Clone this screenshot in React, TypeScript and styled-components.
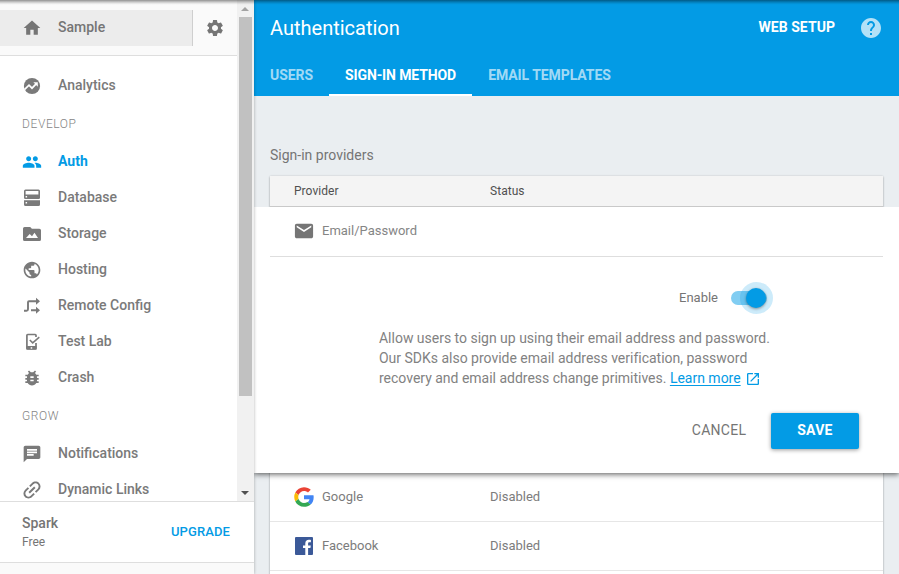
import React from "react";
import styled, { createGlobalStyle, css } from "styled-components";
import {
  MdHome,
  MdSettings,
  MdPeople,
  MdPublic,
  MdBugReport,
  MdChat,
  MdEmail,
  MdHelp,
  MdLink,
  MdOpenInNew,
} from "react-icons/md";

const BLUE = "#039be5";
const GREY = "#757575";

const GlobalStyle = createGlobalStyle`
  * { box-sizing: border-box; }
  body {
    margin: 0;
    overflow: hidden;
    font-family: Roboto, "Liberation Sans", sans-serif;
    font-size: 14px;
    color: ${GREY};
  }
  button { font: inherit; border: 0; padding: 0; background: none; cursor: pointer; }
  svg { display: block; flex: none; }
`;

const Shell = styled.div`
  display: flex;
  position: relative;
  width: 899px;
  height: 574px;
  overflow: hidden;
`;

const TopShade = styled.div`
  position: absolute;
  top: 0;
  left: 0;
  right: 0;
  height: 5px;
  z-index: 5;
  pointer-events: none;
  background: linear-gradient(rgba(0, 0, 0, 0.42), rgba(0, 0, 0, 0.2) 40%, rgba(0, 0, 0, 0.03) 80%, transparent);
`;

/* ---------- sidebar ---------- */

const Sidebar = styled.aside`
  display: flex;
  flex-direction: column;
  width: 254px;
  flex: none;
  z-index: 3;
  background: #fff;
  box-shadow: 0 0 3px rgba(0, 0, 0, 0.3);
`;

const ScrollArea = styled.div`
  display: flex;
  height: 501px;
`;

const NavColumn = styled.div`
  width: 237px;
  overflow: hidden;
`;

const ProjectBar = styled.div`
  display: flex;
  height: 56px;
  padding-top: 10px;
  background: #fafafa;
  border-bottom: 1px solid #dedede;
`;

const ProjectButton = styled.button`
  display: flex;
  align-items: center;
  gap: 16px;
  width: 193px;
  height: 36px;
  padding: 0 0 2px 22px;
  background: #ececec;
  border-right: 1px solid #cfcfcf;
  color: ${GREY};
  font-weight: 500;
  svg { margin-top: 2px; }
`;

const GearButton = styled.button`
  display: grid;
  place-items: center;
  width: 44px;
  height: 36px;
  color: ${GREY};
`;

const Nav = styled.nav`
  padding-top: 11px;
`;

const NavItem = styled.a<{ $active?: boolean }>`
  display: flex;
  align-items: center;
  gap: 16px;
  height: 36px;
  padding-left: 22px;
  font-weight: ${(p) => (p.$active ? 700 : 500)};
  color: ${(p) => (p.$active ? BLUE : "#7a7a7a")};
  svg { margin-top: 2px; }
`;

const NavHeading = styled.div`
  height: 40px;
  padding-left: 22px;
  font-size: 12px;
  font-weight: 300;
  line-height: 42px;
  letter-spacing: 0.6px;
  color: #858585;
`;

const Scrollbar = styled.div`
  display: flex;
  flex-direction: column;
  align-items: center;
  width: 17px;
  padding-right: 1px;
  background: #f1f1f1;
`;

const Arrow = styled.span<{ $down?: boolean }>`
  display: grid;
  place-items: center;
  width: 13px;
  height: 17px;
  &::before {
    content: "";
    border: 4px solid transparent;
    ${(p) =>
      p.$down
        ? css`border-top-color: #505050; border-bottom: 0;`
        : css`border-bottom-color: #a3a3a3; border-top: 0;`}
  }
`;

const Thumb = styled.div`
  width: 13px;
  height: 379px;
  margin-bottom: auto;
  background: #c1c1c1;
`;

const Plan = styled.div`
  display: flex;
  align-items: center;
  justify-content: space-between;
  height: 62px;
  padding: 0 24px 0 22px;
  border-top: 1px solid #dedede;
  border-bottom: 1px solid #dedede;
`;

const PlanName = styled.div`
  font-weight: 500;
  line-height: 19px;
`;

const PlanPrice = styled.div`
  font-size: 12px;
  line-height: 18px;
`;

const UpgradeButton = styled.button`
  padding-bottom: 2px;
  font-size: 13px;
  font-weight: 500;
  letter-spacing: 0.1px;
  color: ${BLUE};
`;

const SidebarFoot = styled.div`
  flex: 1;
  background: #fafafa;
`;

/* ---------- main ---------- */

const Main = styled.main`
  display: flex;
  flex-direction: column;
  flex: 1;
  min-width: 0;
  background: #eaeef1;
`;

const Header = styled.header`
  display: flex;
  flex-direction: column;
  height: 96px;
  background: ${BLUE};
  color: #fff;
`;

const TitleRow = styled.div`
  display: flex;
  align-items: center;
  height: 56px;
  padding: 0 16px;
`;

const Title = styled.h1`
  margin: 0 auto 0 0;
  font-size: 20px;
  font-weight: 400;
`;

const SetupLink = styled.button`
  margin-right: 24px;
  padding-bottom: 2px;
  font-weight: 700;
  letter-spacing: 0.05px;
  line-height: 20px;
  color: #fff;
`;

const HelpButton = styled.button`
  color: rgba(255, 255, 255, 0.7);
`;

const Tabs = styled.div`
  display: flex;
  height: 40px;
`;

const Tab = styled.button<{ $active?: boolean }>`
  height: 40px;
  padding: 0 16px 2px;
  line-height: 36px;
  font-weight: 700;
  letter-spacing: ${(p) => (p.$active ? "-0.11px" : "-0.07px")};
  color: ${(p) => (p.$active ? "#fff" : "rgba(255, 255, 255, 0.65)")};
  box-shadow: ${(p) => (p.$active ? "inset 0 -2px #fff" : "none")};
`;

const Content = styled.section`
  padding: 50px 16px 0;
`;

const SectionTitle = styled.h2`
  margin: 0 0 11px;
  font-size: 14px;
  font-weight: 400;
  line-height: 19px;
`;

const Table = styled.div`
  width: 613px;
  height: 420px;
  background: #fff;
  box-shadow: 0 0 2px rgba(0, 0, 0, 0.12), 0 1px 2px rgba(0, 0, 0, 0.26);
`;

const HeadRow = styled.div`
  display: grid;
  grid-template-columns: 196px 1fr;
  align-items: center;
  height: 31px;
  padding-left: 24px;
  background: #f4f4f4;
  border-bottom: 1px solid #c9c9c9;
  font-size: 12px;
  letter-spacing: 0.05px;
  color: #505050;
`;

const ProviderRow = styled.div`
  display: grid;
  grid-template-columns: 196px 1fr;
  align-items: center;
  height: 49px;
  padding: 0 0 2px 24px;
  border-bottom: 1px solid #e6e6e6;
  font-size: 13px;
  color: #7c7c7c;
  svg { margin: 1px 0 -1px; }
`;

const ProviderName = styled.div`
  display: flex;
  align-items: center;
  gap: 8px;
`;

const ExpandedPanel = styled.div`
  position: relative;
  width: 645px;
  height: 266px;
  margin: 0 -16px;
  padding: 0 16px;
  background: #fff;
  box-shadow: 0 2px 5px rgba(0, 0, 0, 0.5), 0 0 2px rgba(0, 0, 0, 0.12);
  clip-path: inset(0 0 -10px 0);
`;

const PanelHead = styled(ProviderRow)`
  height: 50px;
  border-bottom-color: #dedede;
  color: #858585;
  svg { margin: 0; color: ${GREY}; }
`;

const EnableRow = styled.div`
  display: flex;
  align-items: center;
  gap: 13px;
  height: 32px;
  margin: 25px 0 14px 409px;
  font-size: 13px;
`;

const EnableLabel = styled.span`
  padding-bottom: 2px;
`;

const Switch = styled.span`
  position: relative;
  width: 36px;
  height: 14px;
  border-radius: 7px;
  background: #81cdf2;
`;

const Halo = styled.span`
  position: absolute;
  left: 9px;
  top: -9px;
  width: 33px;
  height: 32px;
  border-radius: 50%;
  background: rgba(3, 155, 229, 0.2);
`;

const Knob = styled.span`
  position: absolute;
  left: 15px;
  top: -3px;
  width: 20px;
  height: 20px;
  border-radius: 50%;
  background: ${BLUE};
  box-shadow: 0 1px 3px rgba(0, 0, 0, 0.4);
`;

const Description = styled.p`
  width: 410px;
  margin: 0 0 0 109px;
  line-height: 20px;
  letter-spacing: -0.01px;
  white-space: nowrap;
  color: #828282;
`;

const LearnMore = styled.a`
  display: inline-flex;
  align-items: center;
  gap: 4px;
  height: 20px;
  vertical-align: top;
  color: ${BLUE};
  span {
    text-decoration: underline;
    text-underline-offset: 2px;
    text-decoration-skip-ink: none;
  }
  svg { margin-top: 1px; }
`;

const Actions = styled.div`
  display: flex;
  justify-content: flex-end;
  gap: 8px;
  padding: 25px 24px 0 0;
`;

const ActionButton = styled.button<{ $primary?: boolean }>`
  width: 88px;
  height: 36px;
  padding-bottom: 2px;
  border-radius: 2px;
  letter-spacing: 0.25px;
  color: ${GREY};
  ${(p) =>
    p.$primary &&
    css`
      background: ${BLUE};
      color: #fff;
      font-weight: 700;
      box-shadow: 0 1px 4px rgba(0, 0, 0, 0.4);
    `}
`;

/* ---------- icons ---------- */

const AnalyticsIcon = () => (
  <svg width="20" height="20" viewBox="0 0 20 20">
    <circle cx="10" cy="10" r="8.1" fill="currentColor" />
    <path d="M2.400 13.600 7 9.200l3 3 4.400-4.500" fill="none" stroke="#fff" strokeWidth="1.700" />
    <path d="M11.400 6.300h4.400v4.400z" fill="#fff" />
  </svg>
);

const DatabaseIcon = () => (
  <svg width="20" height="20" viewBox="0 0 20 20" fill="currentColor">
    <path
      fillRule="evenodd"
      d="M3.500 1.500h13A1.500 1.500 0 0 1 18 3v6.700a1.300 1.300 0 0 1-1.300 1.300H3.300A1.300 1.300 0 0 1 2 9.700V3A1.500 1.500 0 0 1 3.500 1.500zM3.600 3v3.500h12.800V3zM3.600 8v1.500h1.500V8zM2 12.200h16v4.300a1.500 1.500 0 0 1-1.500 1.500h-13A1.500 1.500 0 0 1 2 16.500zM3.600 14v1.600h1.500V14z"
    />
  </svg>
);

const StorageIcon = () => (
  <svg width="20" height="20" viewBox="0 0 20 20" fill="currentColor">
    <path
      fillRule="evenodd"
      d="M2.600 3h5.600l1.700 1.700h7.500A1.600 1.600 0 0 1 19 6.300v9.100a1.600 1.600 0 0 1-1.600 1.600H2.600A1.600 1.600 0 0 1 1 15.400V4.600A1.600 1.600 0 0 1 2.600 3zM4 14.100h12l-3.500-5.300-2.500 3.400-2.300-2.200z"
    />
  </svg>
);

const ConfigIcon = () => (
  <svg width="20" height="20" viewBox="0 0 20 20">
    <path d="M2 14.700h2.500q1.500 0 1.500-1.500V6.200q0-1 1-1H14.500M9 14.200h5.500" fill="none" stroke="currentColor" strokeWidth="1.900" />
    <path d="M14 1.700 18 5.200l-4 3.500zM14 10.700l4 3.500-4 3.500z" fill="currentColor" />
  </svg>
);

const TestLabIcon = () => (
  <svg width="20" height="20" viewBox="0 0 20 20">
    <path
      d="M14 5V3.300q0-.8-.8-.8H5.700q-.8 0-.8.8v12.900q0 .8.8.8h7.500q.8 0 .8-.8V11"
      fill="none"
      stroke="currentColor"
      strokeWidth="1.700"
    />
    <path d="M4.500 14h10v3.500h-10z" fill="currentColor" />
    <path d="M8.700 15.200h1.500v1.500H8.700z" fill="#fff" />
    <path d="m7.800 8 2.900 2.900 6.600-5.800" fill="none" stroke="currentColor" strokeWidth="1.500" />
  </svg>
);

const TiltedLink = styled(MdLink)`
  transform: rotate(-45deg) scale(1.2);
`;

const GoogleIcon = () => (
  <svg width="20" height="20" viewBox="3 3 42 42">
    <path fill="#EA4335" d="M24 11.500c3.300 0 6.100 1.100 8.300 3.200l5.900-5.900C34.600 5.400 29.800 3.500 24 3.500 16 3.500 9.100 8 5.700 14.700l6.900 5.300c1.600-4.900 6.100-8.500 11.400-8.500z" />
    <path fill="#4285F4" d="M44.300 24.500c0-1.500-.1-2.900-.4-4.200H24v8.200h11.500c-.5 2.600-2 4.800-4.200 6.300l6.700 5.200c4-3.700 6.300-9.100 6.300-15.500z" />
    <path fill="#FBBC05" d="M12.600 28c-.4-1.300-.7-2.600-.7-4s.3-2.700.7-4l-6.900-5.300A20.500 20.500 0 0 0 3.500 24c0 3.400.8 6.500 2.200 9.300z" />
    <path fill="#34A853" d="M24 44.500c5.600 0 10.300-1.800 14-5l-6.700-5.200c-1.900 1.300-4.300 2.100-7.300 2.100-5.300 0-9.800-3.500-11.400-8.400l-6.900 5.300C9.100 40 16 44.500 24 44.500z" />
  </svg>
);

const FacebookIcon = () => (
  <svg width="20" height="20" viewBox="0 0 20 20">
    <rect x="1" y="1" width="18" height="18" rx="1" fill="#3b5998" />
    <path
      d="M11.300 19v-6.900H9V9.400h2.300v-2c0-2.300 1.400-3.600 3.500-3.600 1 0 1.800.1 2.100.1v2.400h-1.500c-1.100 0-1.300.6-1.300 1.300v1.800h2.700l-.4 2.700h-2.300V19z"
      fill="#fff"
    />
  </svg>
);

/* ---------- data ---------- */

const developItems = [
  { label: "Auth", icon: <MdPeople size={20} />, active: true },
  { label: "Database", icon: <DatabaseIcon /> },
  { label: "Storage", icon: <StorageIcon /> },
  { label: "Hosting", icon: <MdPublic size={20} /> },
  { label: "Remote Config", icon: <ConfigIcon /> },
  { label: "Test Lab", icon: <TestLabIcon /> },
  { label: "Crash", icon: <MdBugReport size={20} /> },
];

const growItems = [
  { label: "Notifications", icon: <MdChat size={20} /> },
  { label: "Dynamic Links", icon: <TiltedLink size={20} /> },
];

const providers = [
  { label: "Google", icon: <GoogleIcon /> },
  { label: "Facebook", icon: <FacebookIcon /> },
];

export default function App() {
  return (
    <Shell>
      <GlobalStyle />
      <TopShade />
      <Sidebar>
        <ScrollArea>
          <NavColumn>
            <ProjectBar>
              <ProjectButton>
                <MdHome size={20} />
                Sample
              </ProjectButton>
              <GearButton aria-label="Settings">
                <MdSettings size={20} />
              </GearButton>
            </ProjectBar>
            <Nav>
              <NavItem>
                <AnalyticsIcon />
                Analytics
              </NavItem>
              <NavHeading>DEVELOP</NavHeading>
              {developItems.map((item) => (
                <NavItem key={item.label} $active={item.active}>
                  {item.icon}
                  {item.label}
                </NavItem>
              ))}
              <NavHeading>GROW</NavHeading>
              {growItems.map((item) => (
                <NavItem key={item.label}>
                  {item.icon}
                  {item.label}
                </NavItem>
              ))}
            </Nav>
          </NavColumn>
          <Scrollbar>
            <Arrow />
            <Thumb />
            <Arrow $down />
          </Scrollbar>
        </ScrollArea>
        <Plan>
          <div>
            <PlanName>Spark</PlanName>
            <PlanPrice>Free</PlanPrice>
          </div>
          <UpgradeButton>UPGRADE</UpgradeButton>
        </Plan>
        <SidebarFoot />
      </Sidebar>
      <Main>
        <Header>
          <TitleRow>
            <Title>Authentication</Title>
            <SetupLink>WEB SETUP</SetupLink>
            <HelpButton aria-label="Help">
              <MdHelp size={24} />
            </HelpButton>
          </TitleRow>
          <Tabs>
            <Tab>USERS</Tab>
            <Tab $active>SIGN-IN METHOD</Tab>
            <Tab>EMAIL TEMPLATES</Tab>
          </Tabs>
        </Header>
        <Content>
          <SectionTitle>Sign-in providers</SectionTitle>
          <Table>
            <HeadRow>
              <span>Provider</span>
              <span>Status</span>
            </HeadRow>
            <ExpandedPanel>
              <PanelHead>
                <ProviderName>
                  <MdEmail size={20} viewBox="1 1 22 22" />
                  <span>Email/Password</span>
                </ProviderName>
              </PanelHead>
              <EnableRow>
                <EnableLabel>Enable</EnableLabel>
                <Switch role="switch" aria-checked="true">
                  <Halo />
                  <Knob />
                </Switch>
              </EnableRow>
              <Description>
                Allow users to sign up using their email address and password.
                <br />
                Our SDKs also provide email address verification, password
                <br />
                recovery and email address change primitives.{" "}
                <LearnMore>
                  <span>Learn more</span>
                  <MdOpenInNew size={16} />
                </LearnMore>
              </Description>
              <Actions>
                <ActionButton>CANCEL</ActionButton>
                <ActionButton $primary>SAVE</ActionButton>
              </Actions>
            </ExpandedPanel>
            {providers.map((provider) => (
              <ProviderRow key={provider.label}>
                <ProviderName>
                  {provider.icon}
                  {provider.label}
                </ProviderName>
                <span>Disabled</span>
              </ProviderRow>
            ))}
          </Table>
        </Content>
      </Main>
    </Shell>
  );
}
